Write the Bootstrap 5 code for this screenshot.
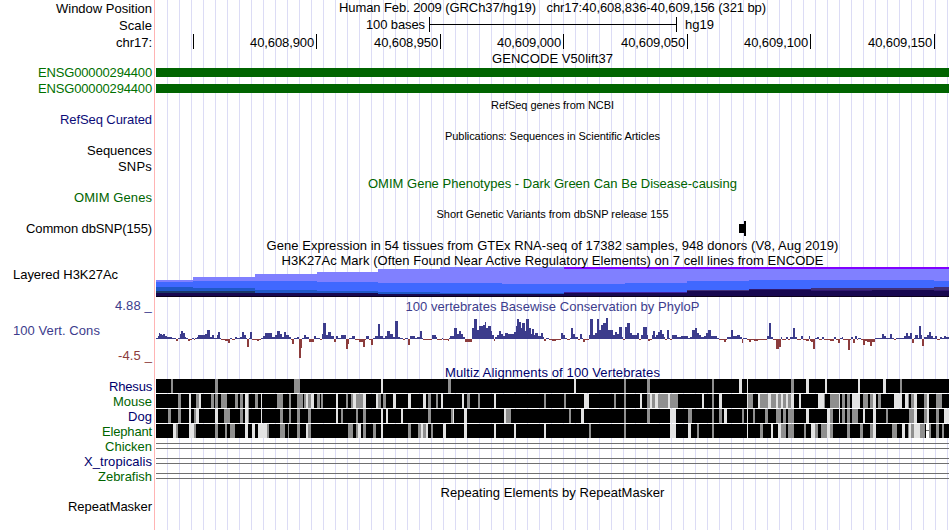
<!DOCTYPE html>
<html lang="en">
<head>
  <meta charset="UTF-8" />
  <meta name="viewport" content="width=device-width, initial-scale=1.0"/>
  <title>chr17:40,608,836-40,609,156 - Genome Browser</title>
  <link href="https://cdn.jsdelivr.net/npm/bootstrap@5.3.2/dist/css/bootstrap.min.css" rel="stylesheet">
  <style>
    body {
      background: #fff;
      color: #000;
      font-family: "Liberation Sans", Arial, sans-serif;
      font-size: 13px;
      line-height: 16px;
    }
    /* left label area, pink divider, then a guide line every 12px */
    .browser {
      width: 949px;
      height: 530px;
      background-image:
        linear-gradient(#ffb4b4, #ffb4b4),
        linear-gradient(#fff, #fff),
        linear-gradient(90deg, #dcdcf5 1px, transparent 1px);
      background-size: 1px 100%, 156px 100%, 12px 100%;
      background-position: 154px 0, 0 0, 167px 0;
      background-repeat: no-repeat, no-repeat, repeat-x;
    }
    .track-label { width: 156px; padding-right: 4px; }
    .track-plot { width: 793px; }
    .track-plot svg { display: block; overflow: visible; shape-rendering: crispEdges; }
    .side-name { padding-left: 13px; }
    .fine { font-size: 11px; }
    .drop { padding-top: 1px; }
    .lift { margin-top: -1px; }
    .h14 { height: 14px; }
    .h15 { height: 15px; }
    .h16 { height: 16px; }
    .h17 { height: 17px; }
    .h30 { height: 30px; }
    .h68 { height: 68px; }
    .gene-green { color: #007000; }
    .dark-green { color: #006400; }
    .navy { color: #00006c; }
    .refseq-blue { color: #0c0c78; }
    .cons-blue { color: #3c3c8c; }
    .cons-red { color: #8c3c3c; }
    .cons-range { padding-top: 1px; padding-bottom: 1px; }
    .cons-title { height: 17px; line-height: 20px; }
    .gene-bar { height: 9px; margin-top: 3px; background: #006400; }
    .scale-lead { width: 273px; padding-right: 4px; }
    .scale-line { width: 248px; height: 15px; border-left: 1px solid #000; border-right: 1px solid #000; }
    .scale-line div { height: 8px; border-bottom: 1px solid #000; }
    .tick { height: 15px; border-right: 1px solid #000; padding-right: 2px; line-height: 17px; }
    .tick-38 { width: 38px; }
    .tick-123 { width: 123px; }
    .tick-124 { width: 124px; }
  </style>
</head>
<body>

  <div class="browser overflow-hidden" id="browser">
    <div class="d-flex h17">
      <div class="track-label text-end drop"><span data-w="96">Window Position</span></div>
      <div class="track-plot text-center"><span data-w="427">Human Feb. 2009 (GRCh37/hg19) &nbsp; chr17:40,608,836-40,609,156 (321 bp)</span></div>
    </div>
    <div class="d-flex h17">
      <div class="track-label text-end drop"><span data-w="33">Scale</span></div>
      <div class="track-plot d-flex">
        <div class="scale-lead text-end"><span data-w="59">100 bases</span></div>
        <div class="scale-line"><div></div></div>
        <div class="ps-2"><span data-w="29">hg19</span></div>
      </div>
    </div>
    <div class="d-flex h17">
      <div class="track-label text-end drop"><span data-w="36">chr17:</span></div>
      <div class="track-plot d-flex text-end">
        <div class="tick tick-38"></div>
        <div class="tick tick-123"><span data-w="64">40,608,900</span></div>
        <div class="tick tick-124"><span data-w="64">40,608,950</span></div>
        <div class="tick tick-123"><span data-w="64">40,609,000</span></div>
        <div class="tick tick-124"><span data-w="64">40,609,050</span></div>
        <div class="tick tick-123"><span data-w="64">40,609,100</span></div>
        <div class="tick tick-124"><span data-w="64">40,609,150</span></div>
      </div>
    </div>

    <div class="d-flex h14">
      <div class="track-label"></div>
      <div class="track-plot text-center"><span data-w="121">GENCODE V50lift37</span></div>
    </div>
    <div class="d-flex h16">
      <div class="track-label text-end gene-green"><span data-w="114">ENSG00000294400</span></div>
      <div class="track-plot"><div class="gene-bar"></div></div>
    </div>
    <div class="d-flex h16">
      <div class="track-label text-end gene-green"><span data-w="114">ENSG00000294400</span></div>
      <div class="track-plot"><div class="gene-bar"></div></div>
    </div>

    <div class="d-flex h16">
      <div class="track-label"></div>
      <div class="track-plot text-center fine"><span data-w="123">RefSeq genes from NCBI</span></div>
    </div>
    <div class="d-flex h14">
      <div class="track-label text-end refseq-blue lift"><span data-w="92">RefSeq Curated</span></div>
    </div>
    <div class="d-flex h17">
      <div class="track-label"></div>
      <div class="track-plot text-center fine drop"><span data-w="215">Publications: Sequences in Scientific Articles</span></div>
    </div>
    <div class="d-flex h15">
      <div class="track-label text-end lift"><span data-w="65">Sequences</span></div>
    </div>
    <div class="d-flex h16">
      <div class="track-label text-end"><span data-w="34">SNPs</span></div>
    </div>
    <div class="d-flex h16">
      <div class="track-label"></div>
      <div class="track-plot text-center dark-green drop"><span data-w="369">OMIM Gene Phenotypes - Dark Green Can Be Disease-causing</span></div>
    </div>
    <div class="d-flex h15">
      <div class="track-label text-end dark-green lift"><span data-w="78">OMIM Genes</span></div>
    </div>
    <div class="d-flex h16">
      <div class="track-label"></div>
      <div class="track-plot text-center fine"><span data-w="232">Short Genetic Variants from dbSNP release 155</span></div>
    </div>
    <div class="d-flex h15">
      <div class="track-label text-end lift"><span data-w="126">Common dbSNP(155)</span></div>
      <div class="track-plot">
        <svg width="793" height="15" viewBox="156 222 793 15">
          <rect x="739" y="224" width="5" height="9"/>
          <rect x="744" y="221" width="2" height="15"/>
        </svg>
      </div>
    </div>
    <div class="d-flex h16">
      <div class="track-label"></div>
      <div class="track-plot text-center drop"><span data-w="572">Gene Expression in 54 tissues from GTEx RNA-seq of 17382 samples, 948 donors (V8, Aug 2019)</span></div>
    </div>
    <div class="d-flex h14">
      <div class="track-label"></div>
      <div class="track-plot text-center position-relative z-1"><span data-w="542">H3K27Ac Mark (Often Found Near Active Regulatory Elements) on 7 cell lines from ENCODE</span></div>
    </div>
    <div class="d-flex h30">
      <div class="track-label side-name"><span data-w="105">Layered H3K27Ac</span></div>
      <div class="track-plot"><svg id="h3k27ac" width="793" height="30" viewBox="156 267 793 30"></svg></div>
    </div>

    <div class="d-flex h68">
      <div class="track-label d-flex flex-column justify-content-between cons-blue cons-range">
        <div class="text-end"><span data-w="37">4.88 _</span></div>
        <div class="side-name"><span data-w="87">100 Vert. Cons</span></div>
        <div class="text-end cons-red"><span data-w="34">-4.5 _</span></div>
      </div>
      <div class="track-plot">
        <div class="text-center cons-blue cons-title"><span data-w="294">100 vertebrates Basewise Conservation by PhyloP</span></div>
        <svg id="phylop" width="793" height="51" viewBox="156 314 793 51"></svg>
      </div>
    </div>

    <div class="d-flex h14">
      <div class="track-label"></div>
      <div class="track-plot text-center navy"><span data-w="215">Multiz Alignments of 100 Vertebrates</span></div>
    </div>
    <div id="multiz"></div>

    <div class="d-flex h15">
      <div class="track-label"></div>
      <div class="track-plot text-center drop"><span data-w="224">Repeating Elements by RepeatMasker</span></div>
    </div>
    <div class="d-flex h16">
      <div class="track-label text-end"><span data-w="84">RepeatMasker</span></div>
    </div>
  </div>

  <script>
    const END = 949;
    const rect = (x, y, w, h, fill) => `<rect x="${x}" y="${y}" width="${w}" height="${h}" fill="${fill}"/>`;

    // each step: start x, then [top y, colour] layers from back to front
    const marks = [
      [156, [280, "#8080ff"], [282, "#4068ff"], [287, "#2058c8"], [291, "#183868"], [293, "#180850"]],
      [193, [277, "#8080ff"], [281, "#4068ff"], [288, "#2058c8"], [291, "#183868"], [293, "#180850"]],
      [255, [274, "#8080ff"], [281, "#4068ff"], [290, "#2058c8"], [293, "#180850"]],
      [317, [272, "#8080ff"], [282, "#4068ff"], [291, "#2058c8"], [293, "#180850"]],
      [378, [269, "#8080ff"], [283, "#4068ff"], [292, "#2058c8"], [294, "#180850"]],
      [440, [267, "#8080ff"], [283, "#4068ff"], [293, "#2058c8"], [294, "#180850"]],
      [502, [267, "#8080ff"], [284, "#4068ff"], [293, "#2058c8"], [294, "#180850"]],
      [564, [267, "#8000ff"], [269, "#8080ff"], [284, "#4068ff"], [292, "#4020a0"], [293, "#180850"]],
      [625, [267, "#8000ff"], [269, "#8080ff"], [283, "#4068ff"], [292, "#4020a0"], [293, "#180850"]],
      [687, [267, "#8000ff"], [269, "#8080ff"], [281, "#4068ff"], [290, "#403078"], [291, "#180850"]],
      [749, [267, "#8000ff"], [269, "#8080ff"], [280, "#4068ff"], [289, "#301870"], [290, "#180850"]],
      [811, [267, "#8000ff"], [269, "#8080ff"], [280, "#4068ff"], [288, "#403078"], [290, "#301870"], [291, "#180850"]],
      [872, [267, "#8000ff"], [269, "#8080ff"], [280, "#4068ff"], [288, "#403078"], [290, "#180850"]],
      [934, [267, "#8000ff"], [269, "#8080ff"], [281, "#4068ff"], [287, "#403078"], [290, "#301870"], [291, "#180850"]]
    ];
    let html = "";
    marks.forEach((step, i) => {
      const x = step[0];
      const next = i + 1 < marks.length ? marks[i + 1][0] : END;
      step.slice(1).forEach(([y, color]) => {
        html += rect(x, y, next - x, 297 - y, color);
      });
    });
    html += rect(156, 296, END - 156, 1, "#0c0018");
    document.getElementById("h3k27ac").innerHTML = html;

    // x:height steps, negative values hang below the base line
    const scores = `156:1 158:3 159:6 160:5 162:4 163:5 165:3 167:2 172:1 176:-2 178:1 180:5 181:8 183:6 185:2 186:1 188:-2
      190:-1 192:1 194:-1 195:1 197:2 198:4 205:5 207:9 210:2 212:4 214:1 217:4 218:7 220:1 221:-1 225:-2 228:-4 230:1 232:-1
      235:2 237:1 240:2 242:7 244:4 246:1 247:-8 249:1 250:7 252:-1 257:-2 259:-1 261:1 263:3 265:6 272:2 275:4 277:8 280:5
      282:2 284:7 286:4 289:2 291:-1 292:-5 294:1 297:2 299:-19 301:-9 302:1 304:4 306:2 309:-3 314:3 316:1 320:-1 322:5
      323:16 326:4 328:7 331:3 334:-3 336:3 338:1 341:4 346:-10 348:-5 349:1 352:3 355:-1 359:-3 363:-8 365:-1 366:3 369:-1
      371:-6 373:1 375:3 378:15 380:3 383:1 385:3 387:8 390:5 393:2 395:18 398:2 400:1 403:-1 405:1 408:-6 410:3 415:1 417:2
      420:8 422:1 423:-1 432:4 436:2 437:-1 442:1 443:-1 448:-2 449:1 450:3 454:11 457:5 459:8 461:5 463:2 465:-3 472:11
      474:20 477:9 479:13 483:14 485:17 486:11 488:13 491:8 492:4 494:-2 495:2 497:4 499:8 501:5 503:3 505:6 508:5 514:7
      516:13 517:20 519:17 521:11 522:16 525:8 526:20 529:11 531:5 532:10 534:4 535:6 538:3 541:6 543:2 544:-2 546:1 549:-1
      552:-2 556:-1 561:6 563:4 565:1 567:-1 570:1 571:11 573:5 575:2 578:-1 580:5 582:1 583:-3 585:-1 589:4 590:20 593:4
      595:6 597:20 599:9 601:14 603:16 606:21 608:9 613:4 615:7 617:5 619:12 622:2 623:-1 625:12 627:16 630:6 632:4 637:6
      639:-1 641:4 643:12 647:4 648:-2 650:-1 652:4 653:8 655:2 656:4 658:7 660:9 662:5 664:2 665:-1 667:9 669:1 670:-1
      672:4 677:2 681:3 688:1 690:2 692:9 695:11 697:6 699:4 701:2 704:3 706:6 708:9 711:3 714:3 717:1 719:-1 724:-3 726:-1
      727:2 731:9 733:3 737:4 740:2 742:-4 743:1 747:-1 749:-3 751:-1 754:-2 758:-1 767:3 769:16 771:2 773:-1 776:-10 779:-8
      781:2 782:-1 786:2 788:-1 790:2 793:11 795:2 797:-1 801:3 803:-1 806:-2 809:3 810:-2 811:-3 813:-10 815:1 817:2 819:-1
      822:2 824:-1 830:-2 834:2 836:-1 838:-4 840:1 842:2 843:-1 848:-11 850:-1 851:2 853:-4 855:3 857:-1 858:1 861:-1
      863:-6 865:-2 867:-3 870:-7 872:-3 875:1 882:5 884:3 886:1 890:5 892:1 894:-1 896:1 904:3 906:6 908:3 910:6 912:-4
      914:1 915:4 918:1 919:13 921:4 922:-7 924:2 927:4 929:7 931:3 933:1 935:3 937:-1 940:2 942:1 944:3 946:2`
      .split(/\s+/).map(s => s.split(":").map(Number));
    html = "";
    scores.forEach(([x, v], i) => {
      const next = i + 1 < scores.length ? scores[i + 1][0] : END;
      html += v > 0 ? rect(x, 339 - v, next - x, v, "#3c3c8c") : rect(x, 339, next - x, -v, "#8c3c3c");
    });
    document.getElementById("phylop").innerHTML = html;

    // alignment gaps as shade, x, width: g = grey, w = light, b = blank
    const species = [
      { name: "Rhesus", w: 43, css: "navy", gaps: `g171,2 g215,3 g294,6 w381,2 g448,3 w574,2 g624,2 g647,3 g712,2 w739,3 w747,1
        g791,3 w806,3 w825,2 w858,2 w883,3 g900,2` },
      { name: "Mouse", w: 39, css: "dark-green", gaps: `g178,3 w189,2 g196,3 w199,2 g211,3 g215,3 g221,6 g235,3 g240,3 w245,3 g248,1
        g255,3 w261,1 g277,6 g289,2 g297,6 g304,2 w306,2 g308,3 w311,3 g317,3 g321,2 w336,2 g346,2 g351,2 w353,3 g356,7
        w363,3 w376,2 g378,3 g383,3 w393,3 w408,3 w423,3 g428,3 g436,2 w441,2 w462,2 g467,3 g478,2 w494,2 g544,2 g564,2
        w584,5 g614,2 g624,2 w640,2 g647,3 w650,2 g652,3 w655,3 g658,10 w668,2 g670,8 w702,2 g712,2 w719,3 w747,1 g748,5
        w758,2 g760,8 w768,3 g771,5 w776,2 g778,3 w781,2 g783,3 w786,2 g788,3 w791,3 w799,2 w818,6 g824,1 g830,9 w839,1
        g842,3 g847,3 w852,8 g863,5 g870,3 w873,3 g878,3 w894,8 w905,3 g908,1 g911,3 w914,3 g924,3 w927,2 g936,6` },
      { name: "Dog", w: 24, css: "navy", gaps: `g168,3 g178,3 w189,2 g194,2 w196,3 w215,3 g224,6 g240,3 w245,3 g248,1 w261,1 g280,3
        g289,2 g297,3 g308,3 w336,2 g341,2 g356,2 g363,3 w381,2 w386,2 w401,2 g428,3 g451,2 w453,1 w464,3 w504,2 g506,5
        g569,2 w581,3 g624,2 g647,3 w670,6 g688,4 g712,2 g719,3 w724,3 g742,2 w747,1 g753,2 g765,3 g776,5 g783,3 g788,6
        w806,3 w827,3 g830,3 w839,1 g842,3 g847,3 g852,6 w863,2 w873,3 g886,2 g909,5 w914,3 g924,3 w927,2 g936,3 w944,5` },
      { name: "Elephant", w: 50, css: "dark-green", gaps: `w173,3 g176,2 w189,5 g194,2 g215,3 g225,2 g230,5 w245,3 w252,3 w258,9 g267,2
        g280,5 g288,1 g297,3 w306,2 g308,3 g348,5 g356,2 w358,3 g363,3 g373,3 w381,2 g408,3 g418,3 w421,2 g423,3 w426,2
        g431,2 w443,3 w464,3 w494,2 w514,2 w544,2 g589,2 g624,2 w670,6 w688,3 g697,2 g712,2 w747,1 g760,3 w771,2 w778,3
        g781,5 g788,6 g804,2 w811,4 g815,3 g821,6 w827,3 g830,3 g847,3 g860,3 g870,3 w873,3 g892,5 w902,3 g908,1 w909,2
        g911,3 w914,6 g920,5 b926,3 g929,2 g936,3 g942,2` },
      { name: "Chicken", w: 47, css: "dark-green" },
      { name: "X_tropicalis", w: 68, css: "navy" },
      { name: "Zebrafish", w: 54, css: "dark-green" }
    ];
    const shades = { g: "#8f8f8f", w: "#e3e3e3", b: "#ffffff" };
    html = "";
    species.forEach(s => {
      let shapes = "";
      if (s.gaps) {
        shapes += rect(156, 0, END - 156, 14, "#000");
        s.gaps.split(/\s+/).forEach(g => {
          const [x, w] = g.slice(1).split(",").map(Number);
          shapes += rect(x, 0, w, 14, shades[g[0]]);
          if (g[0] === "b") shapes += rect(x, 6, w, 1, "#707070");
        });
      } else {
        shapes += rect(156, 4, END - 156, 1, "#707070") + rect(156, 9, END - 156, 1, "#707070");
      }
      html += `
        <div class="d-flex h15">
          <div class="track-label text-end ${s.css}"><span data-w="${s.w}">${s.name}</span></div>
          <div class="track-plot"><svg width="793" height="15" viewBox="156 0 793 15">${shapes}</svg></div>
        </div>`;
    });
    document.getElementById("multiz").innerHTML = html;

    // spread the letters so that each text fills its width on the track
    document.querySelectorAll("[data-w]").forEach(el => {
      const extra = (el.dataset.w - el.getBoundingClientRect().width) / el.textContent.length;
      el.style.letterSpacing = extra.toFixed(3) + "px";
    });
  </script>

  <script src="https://cdn.jsdelivr.net/npm/bootstrap@5.3.2/dist/js/bootstrap.bundle.min.js"></script>
</body>
</html>
